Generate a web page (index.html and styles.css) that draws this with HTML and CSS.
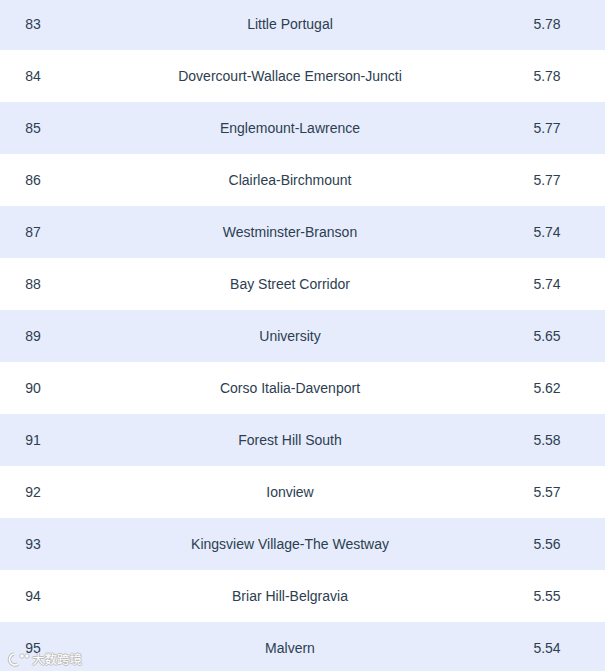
FILE: index.html
```html
<!DOCTYPE html>
<html>
<head>
<meta charset="utf-8">
<link rel="stylesheet" href="styles.css">
</head>
<body>
<div class="table">
  <div class="row odd"><span class="rank">83</span><span class="name">Little Portugal</span><span class="val">5.78</span></div>
  <div class="row"><span class="rank">84</span><span class="name">Dovercourt-Wallace Emerson-Juncti</span><span class="val">5.78</span></div>
  <div class="row odd"><span class="rank">85</span><span class="name">Englemount-Lawrence</span><span class="val">5.77</span></div>
  <div class="row"><span class="rank">86</span><span class="name">Clairlea-Birchmount</span><span class="val">5.77</span></div>
  <div class="row odd"><span class="rank">87</span><span class="name">Westminster-Branson</span><span class="val">5.74</span></div>
  <div class="row"><span class="rank">88</span><span class="name">Bay Street Corridor</span><span class="val">5.74</span></div>
  <div class="row odd"><span class="rank">89</span><span class="name">University</span><span class="val">5.65</span></div>
  <div class="row"><span class="rank">90</span><span class="name">Corso Italia-Davenport</span><span class="val">5.62</span></div>
  <div class="row odd"><span class="rank">91</span><span class="name">Forest Hill South</span><span class="val">5.58</span></div>
  <div class="row"><span class="rank">92</span><span class="name">Ionview</span><span class="val">5.57</span></div>
  <div class="row odd"><span class="rank">93</span><span class="name">Kingsview Village-The Westway</span><span class="val">5.56</span></div>
  <div class="row"><span class="rank">94</span><span class="name">Briar Hill-Belgravia</span><span class="val">5.55</span></div>
  <div class="row odd"><span class="rank">95</span><span class="name">Malvern</span><span class="val">5.54</span></div>
</div>
<div class="watermark">
  <svg class="wm-logo" width="26" height="16" viewBox="0 0 26 16">
    <path d="M8 3 A5.5 5.5 0 1 0 12 13" fill="none" stroke="#bcbcbc" stroke-width="3.4"/>
    <path d="M8 3 A5.5 5.5 0 1 0 12 13" fill="none" stroke="#ffffff" stroke-width="1.6"/>
    <circle cx="16" cy="5" r="2.2" fill="#fff" stroke="#bcbcbc" stroke-width="0.9"/>
    <circle cx="21" cy="5" r="2.2" fill="#fff" stroke="#bcbcbc" stroke-width="0.9"/>
  </svg>
  <span class="wm-text">大数跨境</span>
</div>
</body>
</html>
```
FILE: styles.css
```css
html, body {
  margin: 0;
  padding: 0;
  background: #ffffff;
}
body {
  width: 605px;
  height: 671px;
  overflow: hidden;
  position: relative;
  font-family: "Liberation Sans", Arial, sans-serif;
  font-size: 14px;
  color: #2c3e50;
}
.table {
  margin-top: -2px;
}
.row {
  display: grid;
  grid-template-columns: 66px 448px 66px 1fr;
  height: 52px;
  align-items: center;
  background: #ffffff;
}
.row.odd {
  background: #e6ecfc;
}
.rank, .name, .val {
  text-align: center;
  white-space: nowrap;
}
.watermark {
  position: absolute;
  left: 6px;
  top: 651px;
  display: flex;
  align-items: center;
  gap: 0;
}
.wm-text {
  font-family: "Noto Sans CJK SC", sans-serif;
  font-size: 12.5px;
  line-height: 16px;
  color: #ffffff;
  text-shadow: 1px 0 0 #bcbcbc, -1px 0 0 #bcbcbc, 0 1px 0 #bcbcbc, 0 -1px 0 #bcbcbc;
}
```
